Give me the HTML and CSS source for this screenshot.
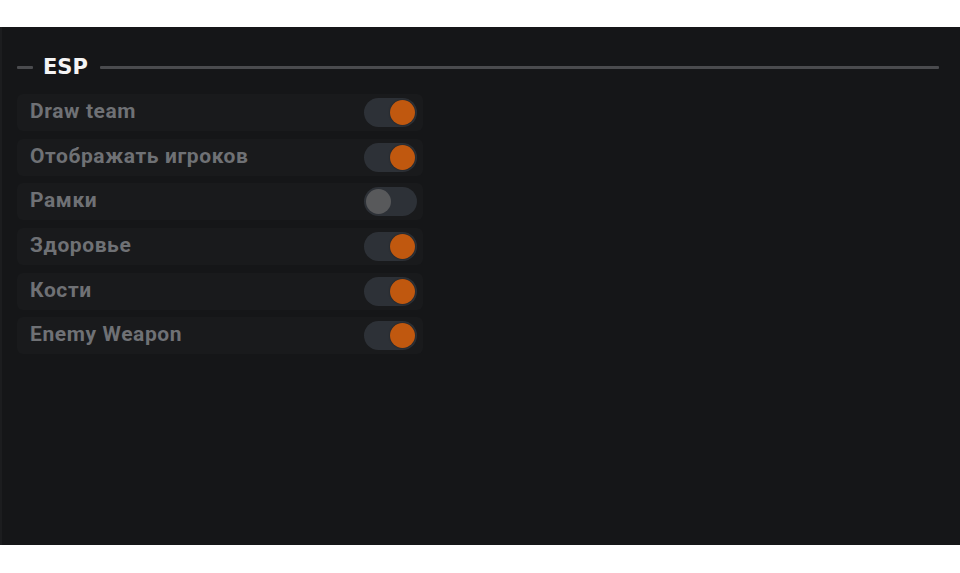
FILE: index.html
```html
<!DOCTYPE html>
<html lang="en">
<head>
  <meta charset="UTF-8" />
  <meta name="viewport" content="width=device-width, initial-scale=1.0" />
  <title>ESP</title>
  <link rel="stylesheet" href="styles.css">
</head>
<body>
  <div class="panel">
    <div class="section-head">
      <div class="dash"></div>
      <h2 class="section-title">ESP</h2>
      <div class="rule"></div>
    </div>
    <div class="options">
      <div class="option">
        <span class="label">Draw team</span>
        <div class="toggle on"><div class="knob"></div></div>
      </div>
      <div class="option">
        <span class="label">Отображать игроков</span>
        <div class="toggle on"><div class="knob"></div></div>
      </div>
      <div class="option">
        <span class="label">Рамки</span>
        <div class="toggle"><div class="knob"></div></div>
      </div>
      <div class="option">
        <span class="label">Здоровье</span>
        <div class="toggle on"><div class="knob"></div></div>
      </div>
      <div class="option">
        <span class="label">Кости</span>
        <div class="toggle on"><div class="knob"></div></div>
      </div>
      <div class="option">
        <span class="label">Enemy Weapon</span>
        <div class="toggle on"><div class="knob"></div></div>
      </div>
    </div>
  </div>
</body>
</html>
```
FILE: styles.css
```css
* {
  margin: 0;
  padding: 0;
  box-sizing: border-box;
}
body {
  background: #fff;
  font-family: Roboto, 'Noto Sans', sans-serif;
}
.panel {
  margin-top: 27px;
  height: 518px;
  background: #151618;
  border-left: 2px solid #1c1d1f;
  padding: 20px 21px 0 15px;
}
.section-head {
  display: flex;
  align-items: center;
  height: 40px;
  margin-bottom: 7px;
}
.dash {
  width: 16px;
  height: 3px;
  background: #4a4b4e;
  border-radius: 1px;
}
.section-title {
  color: #f4f4f4;
  font-family: 'DejaVu Sans', sans-serif;
  font-weight: bold;
  font-size: 21px;
  margin: 0 12px 0 10px;
}
.rule {
  flex: 1;
  height: 3px;
  background: #4a4b4e;
  border-radius: 1px;
}
.options {
  width: 406px;
  display: flex;
  flex-direction: column;
  gap: 7.7px;
}
.option {
  height: 37px;
  display: flex;
  align-items: center;
  justify-content: space-between;
  padding: 0 6px 0 13px;
  background: #191a1c;
  border-radius: 6px;
}
.label {
  color: #6f7175;
  font-size: 21px;
  font-weight: bold;
  letter-spacing: 0.6px;
  margin-top: -3px;
}
.toggle {
  width: 53px;
  height: 29px;
  border-radius: 15px;
  background: #2d3137;
  padding: 2px;
  display: flex;
  align-items: center;
}
.knob {
  width: 25px;
  height: 25px;
  border-radius: 50%;
  background: #58595b;
}
.toggle.on {
  justify-content: flex-end;
}
.toggle.on .knob {
  background: #c0580f;
  box-shadow: 0 0 2px rgba(0,0,0,0.4);
}
```
